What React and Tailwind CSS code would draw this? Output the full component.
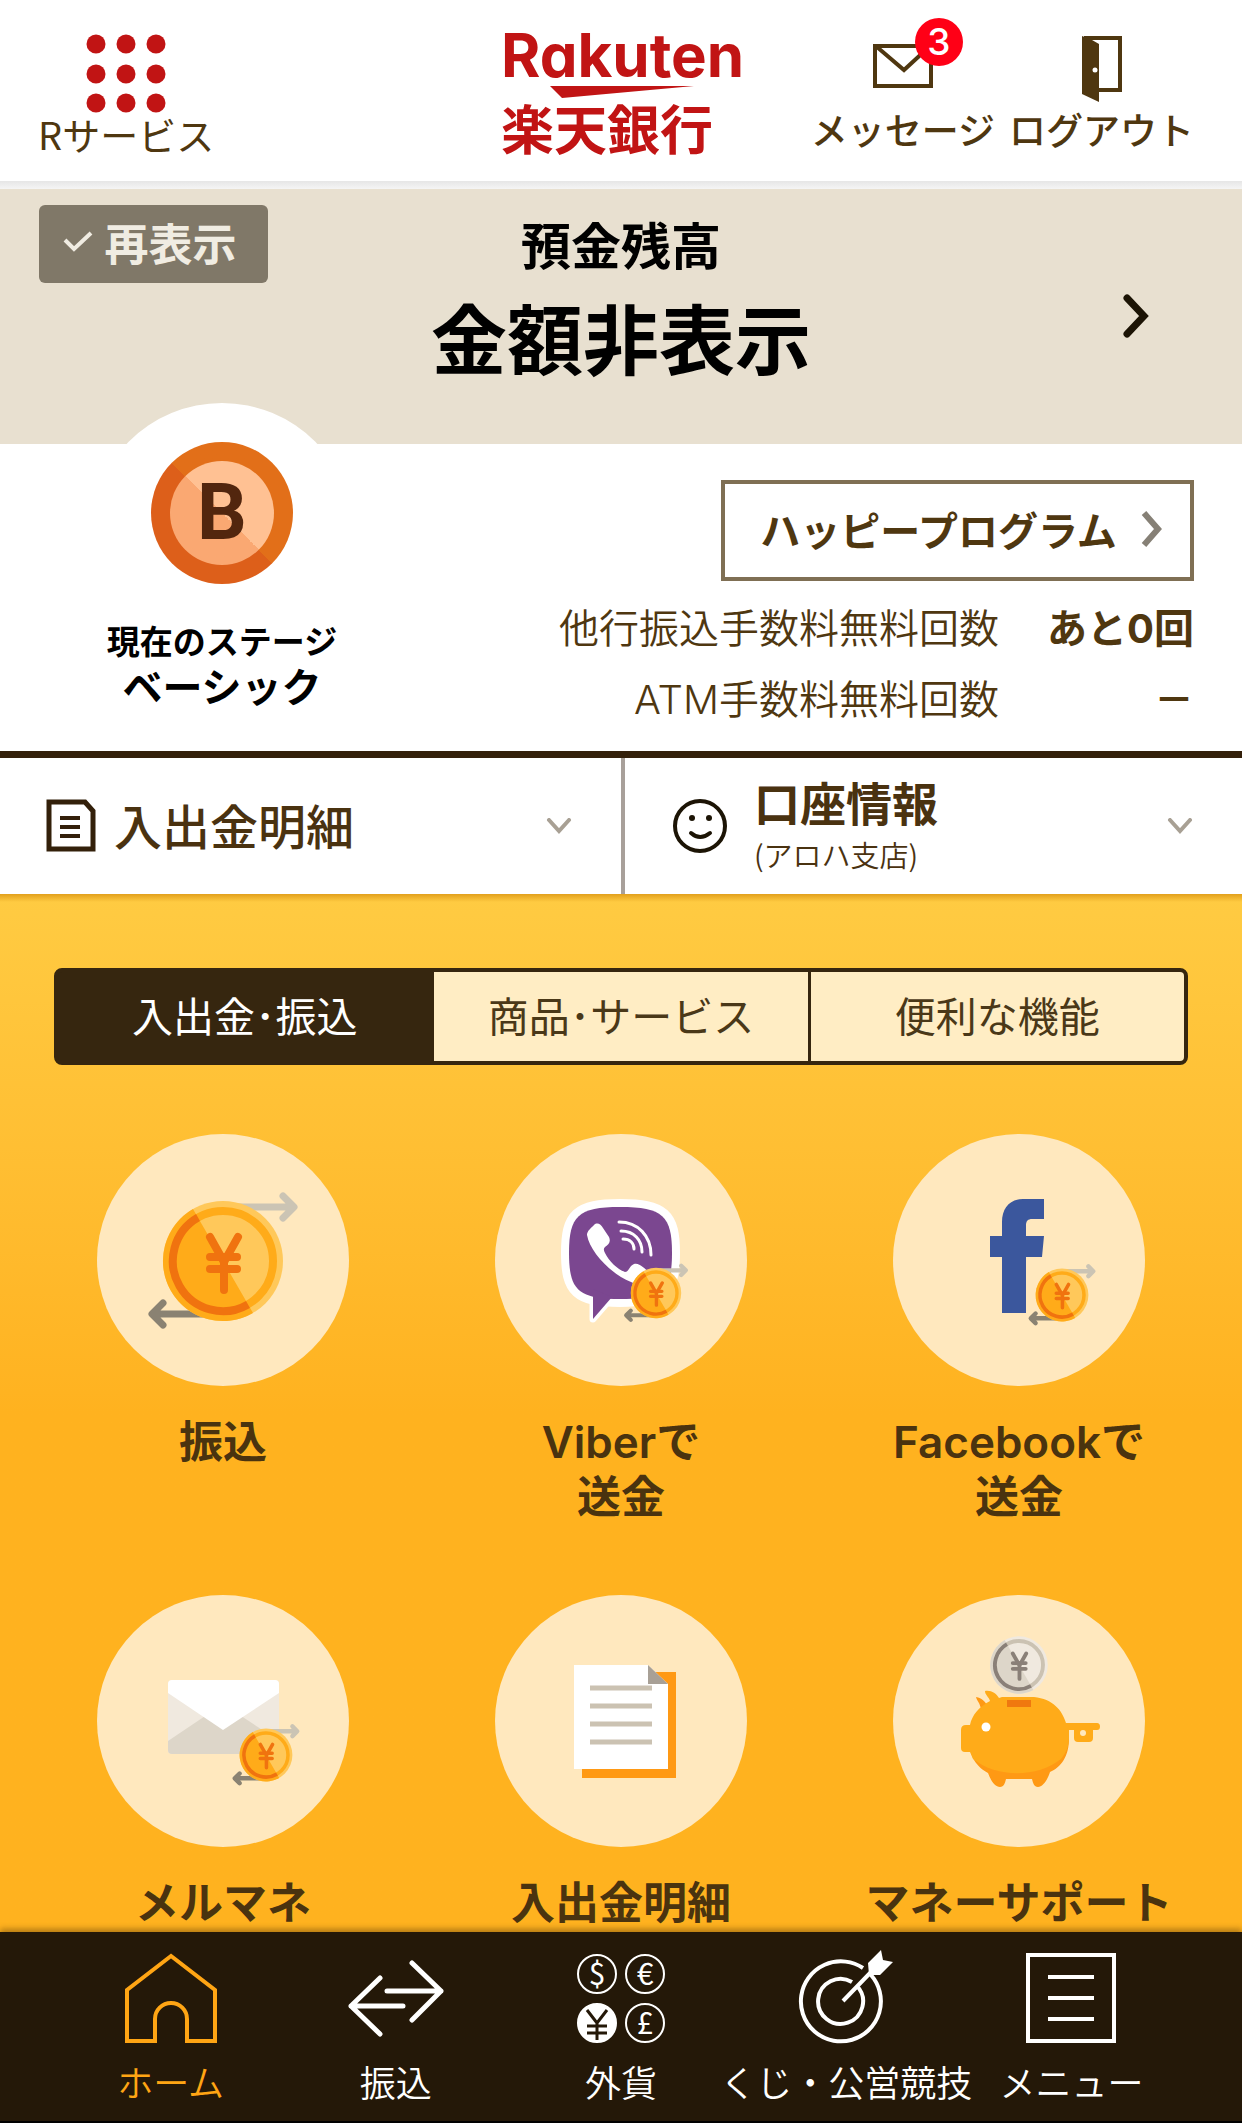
import { useState } from "react";
import clsx from "clsx";

const tabs = ["入出金･振込", "商品･サービス", "便利な機能"];

const goldCoin = { rim: "#ffab19", rimLight: "#ffc85a", ring: "#f0730f", ringLight: "#ffab19", mark: "#f0730f" };
const silverCoin = { rim: "#ddd6c9", rimLight: "#f0e9df", ring: "#8a8078", ringLight: "#cbc2b2", mark: "#8a8078" };

// coin of radius 60 around 0,0
function Coin({ colors }) {
	return <g>
		<circle r="60" fill={colors.rimLight} />
		<circle r="50" fill="none" stroke={colors.ringLight} strokeWidth="8" />
		<path d="M-30 -52A60 60 0 1 0 30 52Z" fill={colors.rim} />
		<path d="M-25 -43.5A50 50 0 1 0 25 43.5" fill="none" stroke={colors.ring} strokeWidth="8" />
		<g fill="none" stroke={colors.mark} strokeWidth="8" strokeLinecap="round" strokeLinejoin="round">
			<path d="M-13 -24L1 1L15 -24M1 1V29" />
			<path d="M-13 -4H14M-13 8H14" />
		</g>
	</g>;
}

function TransferCoin({ x, y, scale = 1 }) {
	return <g transform={`translate(${x} ${y}) scale(${scale})`}>
		<g fill="none" strokeWidth={scale < 1 ? 10 : 7} strokeLinecap="round" strokeLinejoin="round">
			<path d="M10 -54H70M60 -65L71 -54L60 -43" stroke="#cbc4b4" />
			<path d="M-10 53H-70M-60 42L-71 53L-60 64" stroke="#8a8272" />
		</g>
		<Coin colors={goldCoin} />
	</g>;
}

function ViberIcon() {
	const body = "M125 73C168 73 177 82 177 119C177 156 168 165 125 165C83 165 74 156 74 119C74 82 83 73 125 73Z";
	const tail = "M98 155V185L117 163Z";
	return <>
		<path d={body} fill="#fff" stroke="#fff" strokeWidth="16" />
		<path d={tail} fill="#fff" stroke="#fff" strokeWidth="7" strokeLinejoin="round" />
		<path d={body} fill="#7b4790" />
		<path d={tail} fill="#7b4790" />
		<path d="M92 101C92 97 96 94 99 91C102 88 106 90 108 94L114 103C116 108 114 110 110 113C108 115 109 117 110 119C114 127 122 135 130 138C134 138 134 132 139 130C144 128 150 135 154 138L150 150C146 152 140 150 136 148C116 140 95 118 92 101Z" fill="#fff" />
		<g fill="none" stroke="#fff" strokeWidth="3" strokeLinecap="round">
			<path d="M124 88C143 88 156 102 156 121" />
			<path d="M126 97C139 97 147 106 147 118" />
			<path d="M128 105C135 105 139 109 139 115" />
		</g>
		<TransferCoin x={161} y={159} scale={0.42} />
	</>;
}

function FacebookIcon() {
	return <>
		<path d="M151 65V85H139C135 85 133 87 133 91V102H151L149 123H133V179H109V123H97V102H109V88C109 74 117 65 130 65Z" fill="#3b579d" />
		<TransferCoin x={169} y={161} scale={0.44} />
	</>;
}

function MailIcon() {
	return <>
		<rect x="71" y="85" width="111" height="74" rx="4" fill="#f0e9df" />
		<path d="M71 146L126 109L182 146V155Q182 159 178 159H75Q71 159 71 155Z" fill="#ddd6c9" />
		<path d="M71 98V89Q71 85 75 85H178Q182 85 182 89V98L126 135Z" fill="#fff" />
		<TransferCoin x={169} y={160} scale={0.44} />
	</>;
}

function StatementIcon() {
	return <>
		<rect x="87" y="77" width="94" height="106" fill="#ff9914" />
		<path d="M79 70H153L173 89V174H79Z" fill="#fff" />
		<path d="M153 70L173 89H153Z" fill="#a8a096" />
		<path d="M95 93H157M95 111H157M95 129H157M95 147H157" stroke="#cbc2b2" strokeWidth="5" />
	</>;
}

function PiggyIcon() {
	return <>
		<g transform="translate(126 70) scale(0.48)"><Coin colors={silverCoin} /></g>
		<path d="M83 102C89 103 93 107 94 111L88 114C87 108 84 106 83 102Z" fill="#ff9914" />
		<path d="M76 143C76 162 84 172 95 178C98 186 102 192 107 192C111 192 112 188 113 184H139C140 188 141 192 145 192C150 192 155 184 157 177C168 172 176 162 176 143Z" fill="#ff9914" />
		<path d="M92 96C98 95 103 98 106 103L109 102H141C160 104 169 115 173 128H204Q207 128 207 131.500T204 135H200V143Q200 147 196 147H185Q181 147 181 143V135H176V143C176 151 173 158 168 164C144 183 104 183 80 164L77 157H72Q68 157 68 153V135Q68 130 73 130H77C79 120 86 112 97 106C96 102 92 100 92 96Z" fill="#ffab19" />
		<rect x="114" y="105" width="24" height="7" fill="#f0780f" />
		<circle cx="93" cy="132" r="4.500" fill="#fff" />
		<circle cx="190" cy="138" r="3" fill="#ffe8be" />
	</>;
}

const services = [
	{ lines: ["振込"], icon: <TransferCoin x={126} y={127} /> },
	{ lines: ["Viberで", "送金"], icon: <ViberIcon /> },
	{ lines: ["Facebookで", "送金"], icon: <FacebookIcon /> },
	{ lines: ["メルマネ"], icon: <MailIcon /> },
	{ lines: ["入出金明細"], icon: <StatementIcon /> },
	{ lines: ["マネーサポート"], icon: <PiggyIcon /> },
];

const navItems = [
	{
		label: "ホーム",
		icon: <path d="M48 6L4 40V91H32V69A16 16 0 0 1 64 69V91H92V40Z" strokeWidth="4" />,
	},
	{
		label: "振込",
		icon: <path d="M55 56H3M32 28L3 56L32 84M39 41H93M64 13L93 41L64 70" strokeWidth="5" strokeLinecap="round" strokeLinejoin="round" />,
	},
	{
		label: "外貨",
		icon: <>
			<g strokeWidth="2">
				<circle cx="24" cy="24" r="19" />
				<circle cx="72" cy="24" r="19" />
				<circle cx="24" cy="73" r="19" fill="currentColor" />
				<circle cx="72" cy="73" r="19" />
			</g>
			<path d="M14 60L24 73L34 60M24 73V90M14 76H34M14 83H34" stroke="#241808" strokeWidth="3" />
			<g fill="currentColor" stroke="none" fontSize="30" textAnchor="middle">
				<text x="24" y="35">$</text>
				<text x="72" y="35">€</text>
				<text x="72" y="84">£</text>
			</g>
		</>,
	},
	{
		label: "くじ・公営競技",
		icon: <>
			<path d="M73 25A40 40 0 1 1 65 18M59 36A22.500 22.500 0 1 1 54 32M45 51L74 21" strokeWidth="4" />
			<path d="M70 13L83 0L85 10L95 12L82 25L71 25Z" fill="currentColor" stroke="none" />
		</>,
	},
	{
		label: "メニュー",
		icon: <path d="M5 5H91V91H5ZM25 27H71M25 48H71M25 69H71" strokeWidth="4" />,
	},
];

function Chevron({ className }) {
	return <svg viewBox="0 0 26 16" className={clsx("w-[26px] h-4", className)} fill="none" stroke="#a8a094" strokeWidth="4" strokeLinecap="round">
		<path d="M3 2L13 13L23 2" />
	</svg>;
}

function Header() {
	return <header className="grid grid-cols-[1fr_auto_1fr] h-[181px] bg-white text-[37px] leading-10 text-[#4f3710]">
		<a href="#services" className="justify-self-start ml-[38px] pt-[34px] flex flex-col items-center text-[38px]">
			<svg viewBox="0 0 80 80" className="size-20" fill="#c11414">
				{[10, 40, 69].map(cy => [10, 40, 70].map(cx => <circle key={cx + "-" + cy} cx={cx} cy={cy} r="9.500" />))}
			</svg>
			<span>Rサービス</span>
		</a>
		<a href="#home" className="pt-6 w-[240px] text-[#c11414] font-bold">
			<span className="block font-[Inter,sans-serif] text-[60px] leading-[62px] [font-feature-settings:'cv11','ss03']">Rakuten</span>
			<svg viewBox="0 0 240 12" className="w-full h-3" fill="currentColor">
				<path d="M49 0H193L61 12Z" />
			</svg>
			<span className="block text-[53px] leading-[58px]">楽天銀行</span>
		</a>
		<div className="justify-self-end flex gap-[14px] pr-12 pt-8 font-medium">
			<a href="#messages" className="flex flex-col items-center gap-[5px]">
				<span className="relative">
					<svg viewBox="0 0 60 72" className="w-[60px] h-[72px]" fill="none" stroke="currentColor" strokeWidth="4">
						<path d="M2 14H58V54H2ZM4 15L31 38L56 15" />
					</svg>
					<span className="absolute -top-[14px] left-[42px] size-12 rounded-full bg-[#ff0016] text-white text-center font-[Inter,sans-serif] leading-[48px]">3</span>
				</span>
				<span>メッセージ</span>
			</a>
			<a href="#logout" className="flex flex-col items-center gap-[5px]">
				<svg viewBox="0 0 40 72" className="w-10 h-[72px]">
					<path d="M2 6H38V58H14" fill="none" stroke="currentColor" strokeWidth="4" />
					<path d="M0 4L10 8L17 12V70L0 62Z" fill="currentColor" />
					<circle cx="13" cy="38" r="2.500" fill="#fff" />
				</svg>
				<span>ログアウト</span>
			</a>
		</div>
	</header>;
}

function Balance() {
	return <section className="grid grid-cols-[1fr_auto_1fr] items-center bg-[#e8e0d0] text-black">
		<button className="self-start justify-self-start mt-4 ml-[39px] w-[229px] h-[78px] pr-2 pb-1 flex items-center justify-center gap-3 rounded-md bg-[#807868] text-[#f0ece2] text-[44px] font-bold">
			<svg viewBox="0 0 30 22" className="w-[30px] h-[22px]" fill="none" stroke="currentColor" strokeWidth="4">
				<path d="M2 9L11 18L28 2" />
			</svg>
			再表示
		</button>
		<div className="flex flex-col items-center gap-[18px] pt-6 pb-[63px]">
			<h2 className="text-[50px] leading-[60px] font-bold">預金残高</h2>
			<p className="text-[76px] leading-[90px] font-bold">金額非表示</p>
		</div>
		<button aria-label="預金残高" className="justify-self-end mr-[93px]">
			<svg viewBox="0 0 26 46" className="w-[26px] h-[46px]" fill="none" stroke="#1c1405" strokeWidth="7" strokeLinecap="round">
				<path d="M4 4L21 22L4 40" />
			</svg>
		</button>
	</section>;
}

function Stage() {
	return <section className="flex justify-between bg-white pr-12">
		<div className="relative -mt-[41px] ml-[90px] w-[264px] pt-[39px] pb-[41px] rounded-t-[132px] bg-white flex flex-col items-center text-black">
			<div className="size-[142px] rounded-full p-[19px] bg-linear-45 from-[#dd5f1a] from-50% to-[#e26f19] to-50%">
				<div className="size-full rounded-full flex items-center justify-center bg-linear-45 from-[#faa872] from-50% to-[#ffc193] to-50% font-[Roboto,sans-serif] text-[78px] leading-none font-bold text-[#52260e]">B</div>
			</div>
			<p className="mt-9 text-[33px] leading-10 font-bold">現在のステージ</p>
			<p className="text-[40px] leading-[50px] font-bold">ベーシック</p>
		</div>
		<div className="pt-9 flex flex-col items-end gap-3 text-[40px] text-[#4f3710]">
			<button className="w-[473px] h-[101px] pl-2 pb-1 flex items-center justify-center gap-6 border-4 border-[#7f6f54] font-bold">
				ハッピープログラム
				<svg viewBox="0 0 22 38" className="w-[22px] h-[38px]" fill="none" stroke="#868076" strokeWidth="6">
					<path d="M3 3L17 19L3 35" />
				</svg>
			</button>
			<dl className="grid grid-cols-[auto_auto] gap-x-12 leading-[71px] text-right font-[Inter,'Noto_Sans_CJK_JP',sans-serif]">
				<dt className="font-[350]">他行振込手数料無料回数</dt>
				<dd className="font-bold">あと0回</dd>
				<dt className="font-[350]">ATM手数料無料回数</dt>
				<dd className="font-bold">－</dd>
			</dl>
		</div>
	</section>;
}

function AccountBar() {
	return <section className="grid grid-cols-2 h-[143px] border-t-[7px] border-[#33200a] bg-white text-[#4a3210]">
		<button className="flex items-center pl-[46px] pr-[49px] text-left">
			<svg viewBox="0 0 50 54" className="w-[50px] h-[54px] mr-[18px]" fill="none" stroke="#33200a" strokeWidth="5">
				<path d="M3 3H39L47 12V50H3Z" />
				<path d="M14 19H34M14 28H34M14 37H34" strokeWidth="4" />
			</svg>
			<span className="pb-1 text-[48px] font-medium">入出金明細</span>
			<Chevron className="ml-auto" />
		</button>
		<button className="flex items-center pl-[47px] pr-[49px] border-l-4 border-[#a8a09a] text-left">
			<svg viewBox="0 0 56 56" className="size-14 mr-[26px]" fill="none" stroke="#1c1405" strokeWidth="4" strokeLinecap="round">
				<circle cx="28" cy="28" r="25" />
				<path d="M19 35Q28 43 38 35" />
				<g fill="#1c1405" stroke="none">
					<circle cx="20" cy="20" r="3" />
					<circle cx="37" cy="20" r="3" />
				</g>
			</svg>
			<span className="flex flex-col">
				<span className="text-[46px] leading-[56px] font-bold">口座情報</span>
				<span className="text-[29px] leading-[50px] font-[350]">(アロハ支店)</span>
			</span>
			<Chevron className="ml-auto" />
		</button>
	</section>;
}

export default function App() {
	const [activeTab, setActiveTab] = useState(0);
	const [page, setPage] = useState(0);

	return <div className="min-h-screen flex flex-col bg-white font-['Noto_Sans_CJK_JP',sans-serif]">
		<Header />
		<div className="h-2 bg-linear-to-b from-[#e6e6e6] to-[#f5f5f5]" />
		<Balance />
		<Stage />
		<AccountBar />
		<main className="flex-1 flex flex-col bg-linear-to-b from-[#ffcb42] to-[#ffb21f] to-50%">
			<div className="h-2 bg-linear-to-b from-[#e2a01c] to-transparent" />
			<div className="mt-[66px] mx-[54px] h-[97px] grid grid-cols-3 rounded-lg border-4 border-[#36260f] bg-[#36260f] overflow-hidden gap-[3px]">
				{tabs.map((tab, i) => <button
					key={tab}
					onClick={() => setActiveTab(i)}
					className={clsx("pb-1 text-[41px]", i === activeTab ? "bg-[#36260f] text-white" : "bg-[#ffedc4] text-[#4a3818]")}
				>
					{tab}
				</button>)}
			</div>
			<div className="mt-[69px] px-6 grid grid-cols-3 gap-y-[70px]">
				{services.map(({ lines, icon }) => <a key={lines[0]} href="#service" className="flex flex-col items-center">
					<svg viewBox="0 0 252 252" className="size-[252px] mb-[29px] rounded-full bg-[#ffe8be]">{icon}</svg>
					{lines.map(line => <span key={line} className="font-[Inter,'Noto_Sans_CJK_JP',sans-serif] text-[44px] leading-[55px] font-semibold text-[#4a330f] whitespace-nowrap">{line}</span>)}
				</a>)}
			</div>
		</main>
		<nav className="grid grid-cols-5 px-[58px] pt-[18px] pb-5 bg-[#241808] border-b-2 border-black shadow-[0_-3px_6px_rgba(60,35,0,0.4)]">
			{navItems.map(({ label, icon }, i) => <button
				key={label}
				onClick={() => setPage(i)}
				className={clsx("flex flex-col items-center gap-[15px]", i === page ? "text-[#ffa514]" : "text-white")}
			>
				<svg viewBox="0 0 96 96" className="size-24 overflow-visible" fill="none" stroke="currentColor">{icon}</svg>
				<span className="text-[36px] leading-10 font-[350] whitespace-nowrap">{label}</span>
			</button>)}
		</nav>
	</div>;
}
